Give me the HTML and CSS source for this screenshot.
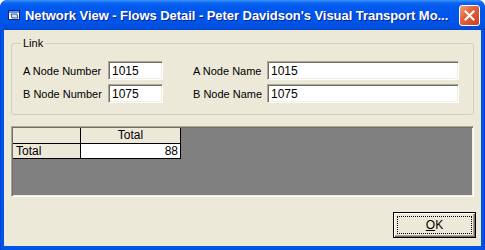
FILE: index.html
```html
<!DOCTYPE html>
<html>
<head>
<meta charset="utf-8">
<link rel="stylesheet" href="styles.css">
</head>
<body>
<div class="window">
  <div class="titlebar">
    <svg class="app-icon" width="13" height="12" viewBox="0 0 13 12">
      <rect x="0.5" y="1.5" width="11" height="9" fill="#ffffff" stroke="#0b2a7a"/>
      <rect x="1" y="2" width="10" height="2" fill="#5a8fe6"/>
      <path d="M3 5 L9 5 L10 9 L4 9 Z" fill="#cfe0ff" stroke="#0b2a7a" stroke-width="0.8"/>
    </svg>
    <span class="title">Network View - Flows Detail - Peter Davidson's Visual Transport Mo...</span>
    <div class="close">
      <svg width="11" height="11" viewBox="0 0 11 11"><path d="M1.5 1.5 L9.5 9.5 M9.5 1.5 L1.5 9.5" stroke="#fff" stroke-width="2" stroke-linecap="square"/></svg>
    </div>
  </div>
  <div class="client">
    <fieldset class="group">
      <legend class="legend">Link</legend>
      <div class="row">
        <span class="lbl lbl-num">A Node Number</span>
        <div class="input input-num">1015</div>
        <span class="lbl lbl-name">A Node Name</span>
        <div class="input input-name">1015</div>
      </div>
      <div class="row">
        <span class="lbl lbl-num">B Node Number</span>
        <div class="input input-num">1075</div>
        <span class="lbl lbl-name">B Node Name</span>
        <div class="input input-name">1075</div>
      </div>
    </fieldset>
    <div class="gridbox">
      <div class="flexgrid">
        <div class="cell fixed"></div>
        <div class="cell fixed center">Total</div>
        <div class="cell fixed">Total</div>
        <div class="cell data right">88</div>
      </div>
    </div>
    <div class="buttons">
      <div class="btn"><span class="focus"><u>O</u>K</span></div>
    </div>
  </div>
</div>
</body>
</html>
```
FILE: styles.css
```css
html, body {
  margin: 0;
  padding: 0;
  background: #ffffff;
}
.window {
  width: 485px;
  height: 250px;
  box-sizing: border-box;
  display: flex;
  flex-direction: column;
  background: linear-gradient(to right, #0831d9 0, #0054e3 1px, #0054e3 calc(100% - 1px), #0831d9 100%);
  border-radius: 7px 7px 0 0;
  overflow: hidden;
  font-family: "Liberation Sans", Arial, sans-serif;
  font-size: 11px;
  color: #000;
}
.titlebar {
  height: 30px;
  flex: none;
  display: flex;
  align-items: center;
  padding: 0 5px 0 8px;
  background: linear-gradient(to bottom, #3d95ff 0, #0a64f0 3px, #0058ee 8px, #0055e9 20px, #0050e0 27px, #0046d0 30px);
  border-radius: 7px 7px 0 0;
}
.app-icon {
  flex: none;
}
.title {
  flex: 1;
  margin-left: 4px;
  color: #fff;
  font-weight: bold;
  font-size: 13px;
  letter-spacing: -0.05px;
  white-space: nowrap;
  overflow: hidden;
  text-shadow: 1px 1px 0 #0a1e8c;
}
.close {
  flex: none;
  width: 21px;
  height: 21px;
  box-sizing: border-box;
  border: 1px solid #fff;
  border-radius: 3px;
  background: linear-gradient(135deg, #f0a080 0, #e2643c 40%, #c8401e 100%);
  display: flex;
  align-items: center;
  justify-content: center;
  margin-left: 6px;
}
.client {
  flex: 1;
  margin: 0 4px 4px 4px;
  background: #ece9d8;
  padding: 6px 7px 8px 7px;
  display: flex;
  flex-direction: column;
}
.group {
  margin: 0;
  min-width: 0;
  border: 1px solid #d0d0bf;
  border-radius: 3px;
  padding: 11px 0 11px 11px;
}
.legend {
  margin-left: -2px;
  padding: 0 2px;
  line-height: 14px;
  font-size: 11px;
}
.row {
  display: flex;
  align-items: center;
  height: 19px;
}
.row + .row {
  margin-top: 4px;
}
.lbl {
  flex: none;
  white-space: nowrap;
}
.lbl-num {
  width: 85px;
}
.lbl-name {
  width: 74px;
  margin-left: 30px;
}
.input {
  flex: none;
  height: 19px;
  box-sizing: border-box;
  background: #fff;
  border-style: solid;
  border-width: 1px;
  border-color: #aca899 #fff #fff #aca899;
  box-shadow: inset 1px 1px 0 #716f64, inset -1px -1px 0 #f1efe2;
  padding: 1px 0 0 3px;
  font-size: 12px;
  line-height: 16px;
}
.input-num {
  width: 55px;
}
.input-name {
  width: 192px;
}
.gridbox {
  margin-top: 11px;
  height: 71px;
  box-sizing: border-box;
  background: #808080;
  border-style: solid;
  border-width: 1px;
  border-color: #aca899 #fff #fff #aca899;
  box-shadow: inset 1px 1px 0 #716f64, inset -1px -1px 0 #f1efe2;
  padding: 1px;
}
.flexgrid {
  display: inline-grid;
  grid-template-columns: 67px 99px;
  grid-template-rows: 15px 14px;
  gap: 1px;
  padding: 0 1px 1px 0;
  background: #000;
  font-size: 12px;
  vertical-align: top;
}
.cell {
  line-height: 14px;
  padding: 0 3px;
  white-space: nowrap;
}
.fixed {
  background: #ece9d8;
}
.data {
  background: #fff;
}
.center {
  text-align: center;
  line-height: 15px;
}
.right {
  text-align: right;
  padding-right: 2px;
}
.buttons {
  margin-top: auto;
  display: flex;
  justify-content: flex-end;
  margin-right: -2px;
}
.btn {
  width: 83px;
  height: 26px;
  box-sizing: border-box;
  border: 1px solid #000;
  background: #ece9d8;
  box-shadow: inset 1px 1px 0 #fff, inset -1px -1px 0 #716f64, inset -2px -2px 0 #aca899;
  padding: 3px;
  display: flex;
}
.focus {
  flex: 1;
  border: 1px dotted #000;
  display: flex;
  align-items: center;
  justify-content: center;
  font-size: 12px;
}
```
